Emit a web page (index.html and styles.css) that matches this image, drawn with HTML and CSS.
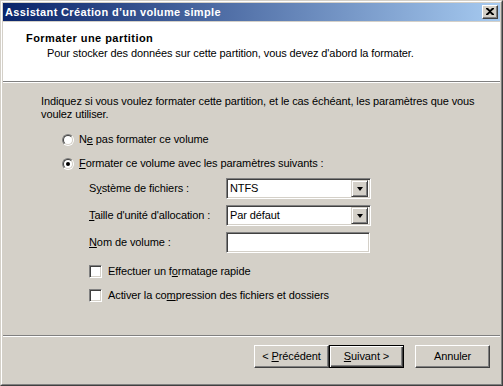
FILE: index.html
```html
<!DOCTYPE html>
<html lang="fr">
<head>
  <meta charset="UTF-8">
  <title>Assistant Création d’un volume simple</title>
  <link rel="stylesheet" href="styles.css">
</head>
<body>
  <div class="window">
    <div class="frame">
      <div class="titlebar">
        <span class="title">Assistant Création d’un volume simple</span>
        <span class="close">
          <svg width="8" height="7" viewBox="0 0 8 7"><path d="M0 0h2l2 2 2-2h2v1l-3 2.5 3 2.5v1h-2l-2-2-2 2h-2v-1l3-2.5-3-2.5z" fill="#000"/></svg>
        </span>
      </div>

      <div class="header">
        <div class="head-title">Formater une partition</div>
        <div class="head-sub">Pour stocker des données sur cette partition, vous devez d'abord la formater.</div>
      </div>

      <div class="content">
        <p class="intro">Indiquez si vous voulez formater cette partition, et le cas échéant, les paramètres que vous<br>voulez utiliser.</p>

        <div class="option">
          <span class="radio"></span>
          <span>N<u>e</u> pas formater ce volume</span>
        </div>
        <div class="option">
          <span class="radio checked"></span>
          <span><u>F</u>ormater ce volume avec les paramètres suivants :</span>
        </div>

        <div class="fields">
          <span class="field-label">S<u>y</u>stème de fichiers :</span>
          <div class="combo"><span class="combo-value">NTFS</span><span class="combo-btn"><i class="arrow"></i></span></div>

          <span class="field-label"><u>T</u>aille d'unité d'allocation :</span>
          <div class="combo"><span class="combo-value">Par défaut</span><span class="combo-btn"><i class="arrow"></i></span></div>

          <span class="field-label"><u>N</u>om de volume :</span>
          <div class="textbox"></div>
        </div>

        <div class="checks">
          <div class="check-row"><span class="checkbox"></span><span>Effectuer un f<u>o</u>rmatage rapide</span></div>
          <div class="check-row"><span class="checkbox"></span><span>Activer la co<u>m</u>pression des fichiers et dossiers</span></div>
        </div>
      </div>

      <div class="buttons">
        <button class="btn">&lt; <u>P</u>récédent</button>
        <button class="btn default"><u>S</u>uivant &gt;</button>
        <button class="btn cancel">Annuler</button>
      </div>
    </div>
  </div>
</body>
</html>
```

FILE: styles.css
```css
* {
  margin: 0;
  padding: 0;
  box-sizing: border-box;
}

body {
  font-family: "Liberation Sans", Arial, sans-serif;
  font-size: 11px;
  line-height: 13px;
  letter-spacing: -0.1px;
  color: #000;
  background: #d4d0c8;
}

u {
  text-decoration: underline;
  text-underline-offset: 1px;
}

.window {
  width: 503px;
  height: 386px;
  border: 1px solid;
  border-color: #d4d0c8 #404040 #404040 #d4d0c8;
  background: #d4d0c8;
}

.frame {
  height: 100%;
  border: 1px solid;
  border-color: #fff #808080 #808080 #fff;
  padding: 1px;
  display: flex;
  flex-direction: column;
}

/* barre de titre */
.titlebar {
  height: 18px;
  margin-bottom: 1px;
  background: linear-gradient(to right, #0a246a, #a6caf0);
  display: flex;
  align-items: center;
  justify-content: space-between;
  padding: 0 2px;
}

.title {
  color: #fff;
  font-weight: bold;
  font-size: 11px;
  letter-spacing: 0.35px;
}

.close {
  width: 16px;
  height: 14px;
  background: #d4d0c8;
  border: 1px solid;
  border-color: #fff #404040 #404040 #fff;
  box-shadow: inset -1px -1px 0 #808080;
  display: flex;
  align-items: center;
  justify-content: center;
  padding: 0 1px 1px 0;
}

/* en-tête blanc */
.header {
  height: 61px;
  background: #fff;
  border-bottom: 1px solid #fff;
  padding: 10px 0 0 23px;
  position: relative;
}

.header::after {
  content: "";
  position: absolute;
  left: 0;
  right: 0;
  bottom: 0;
  height: 1px;
  background: #808080;
}

.head-title {
  font-weight: bold;
  letter-spacing: 0.45px;
}

.head-sub {
  margin-top: 2px;
  padding-left: 21px;
}

.content {
  flex: 1;
  padding: 12px 0 0 38px;
  border-bottom: 1px solid #808080;
  box-shadow: 0 1px 0 #fff;
}

.intro {
  white-space: nowrap;
}

.option {
  display: flex;
  align-items: center;
  gap: 5px;
  margin-left: 21px;
  height: 13px;
  margin-top: 11px;
}

.intro + .option {
  margin-top: 12px;
}

.radio {
  width: 12px;
  height: 12px;
  border-radius: 50%;
  border: 1px solid;
  border-color: #808080 #fff #fff #808080;
  position: relative;
}

.radio::before {
  content: "";
  position: absolute;
  inset: 0;
  border-radius: 50%;
  border: 1px solid;
  border-color: #404040 #d4d0c8 #d4d0c8 #404040;
  background: #fff;
}

.radio.checked::after {
  content: "";
  position: absolute;
  left: 3px;
  top: 3px;
  width: 4px;
  height: 4px;
  border-radius: 50%;
  background: #000;
}

/* champs */
.fields {
  display: grid;
  grid-template-columns: 137px 145px;
  row-gap: 6px;
  align-items: center;
  margin: 8px 0 0 48px;
}

.combo, .textbox {
  height: 21px;
  background: #fff;
  border: 1px solid;
  border-color: #808080 #fff #fff #808080;
  box-shadow: inset 1px 1px 0 #404040, inset -1px -1px 0 #d4d0c8;
}

.textbox {
  width: 144px;
}

.combo {
  display: flex;
  align-items: center;
  justify-content: space-between;
  padding: 2px;
}

.combo-value {
  padding-left: 1px;
}

.combo-btn {
  width: 17px;
  height: 17px;
  background: #d4d0c8;
  border: 1px solid;
  border-color: #d4d0c8 #404040 #404040 #d4d0c8;
  box-shadow: inset 1px 1px 0 #fff, inset -1px -1px 0 #808080;
  display: flex;
  align-items: center;
  justify-content: center;
}

.arrow {
  width: 0;
  height: 0;
  border-left: 3.5px solid transparent;
  border-right: 3.5px solid transparent;
  border-top: 4px solid #000;
}

/* cases à cocher */
.checks {
  margin: 12px 0 0 48px;
}

.check-row {
  display: flex;
  align-items: center;
  gap: 6px;
  height: 13px;
  margin-bottom: 11px;
}

.checkbox {
  width: 13px;
  height: 13px;
  background: #fff;
  border: 1px solid;
  border-color: #808080 #fff #fff #808080;
  box-shadow: inset 1px 1px 0 #404040, inset -1px -1px 0 #d4d0c8;
}

/* boutons */
.buttons {
  height: 46px;
  margin-top: 1px;
  display: flex;
  justify-content: flex-end;
  padding: 8px 10px 0 0;
}

.btn {
  width: 75px;
  height: 23px;
  font: inherit;
  letter-spacing: inherit;
  color: #000;
  background: #d4d0c8;
  border: 1px solid;
  border-color: #fff #404040 #404040 #fff;
  box-shadow: inset -1px -1px 0 #808080;
}

.btn.default {
  border: 1px solid #000;
  box-shadow: inset 1px 1px 0 #fff, inset -1px -1px 0 #404040, inset -2px -2px 0 #808080;
}

.btn.cancel {
  margin-left: 11px;
}
```
